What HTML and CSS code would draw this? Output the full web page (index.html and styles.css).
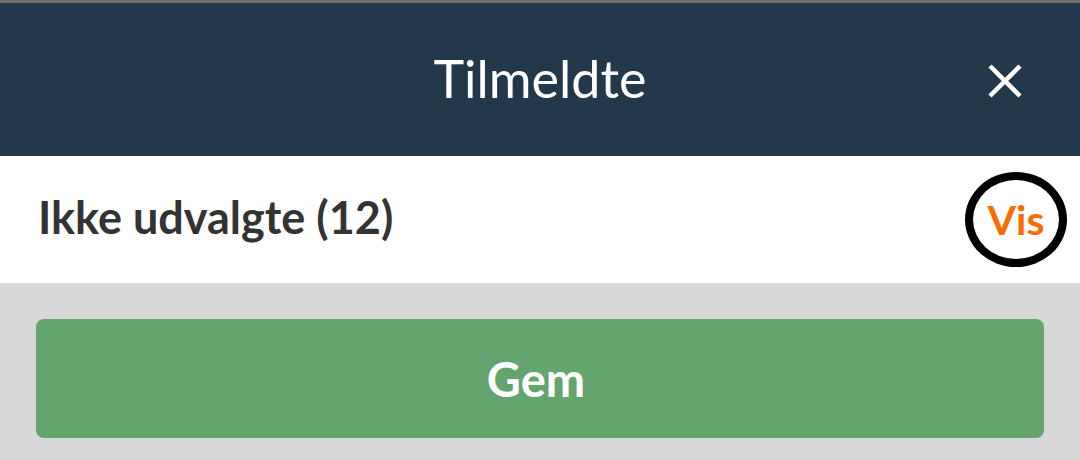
FILE: index.html
```html
<!DOCTYPE html>
<html>
<head>
<meta charset="utf-8" />
<title>Tilmeldte</title>
<link rel="stylesheet" href="styles.css">
</head>
<body>
	<div class="topline"></div>
	<div class="header">
		<h1>Tilmeldte</h1>
		<span class="close">
			<svg width="34" height="34" viewBox="0 0 34 34"><path d="M2 2 L32 32 M32 2 L2 32" stroke="#fff" stroke-width="4.5"/></svg>
		</span>
	</div>
	<div class="row">
		<span class="label">Ikke udvalgte (12)</span>
		<span class="vis">Vis</span>
	</div>
	<div class="footer">
		<button class="save">Gem</button>
	</div>
</body>
</html>
```

FILE: styles.css
```css
body{
	margin:0;
	font-family:Lato, "Liberation Sans", sans-serif;
	background:#d8d8d8;
	width:1080px;
	height:460px;
	overflow:hidden;
}
.topline{
	height:3px;
	background:#6e6e6e;
}
.header{
	height:153px;
	background:#23384a;
	display:flex;
	align-items:center;
	justify-content:center;
	position:relative;
}
.header h1{
	margin:0;
	font-size:52px;
	font-weight:400;
	color:#fff;
	padding-bottom:4px;
}
.close{
	position:absolute;
	right:58px;
	top:61px;
	display:flex;
}
.row{
	height:127px;
	background:#fff;
	display:flex;
	align-items:center;
	justify-content:space-between;
	padding:0 13px 0 38px;
}
.label{
	font-size:45px;
	font-weight:700;
	color:#333;
	padding-bottom:6px;
}
.vis{
	width:86px;
	height:79px;
	border:8px solid #000;
	border-radius:50%;
	display:flex;
	align-items:center;
	justify-content:center;
	font-size:41px;
	font-weight:700;
	color:#ff6a00;
}
.footer{
	padding:36px 36px;
}
.save{
	display:block;
	width:100%;
	height:119px;
	padding:0 8px 0 0;
	border:none;
	border-radius:8px;
	background:#63a46f;
	color:#fff;
	font-family:inherit;
	font-size:47px;
	font-weight:700;
}
```
